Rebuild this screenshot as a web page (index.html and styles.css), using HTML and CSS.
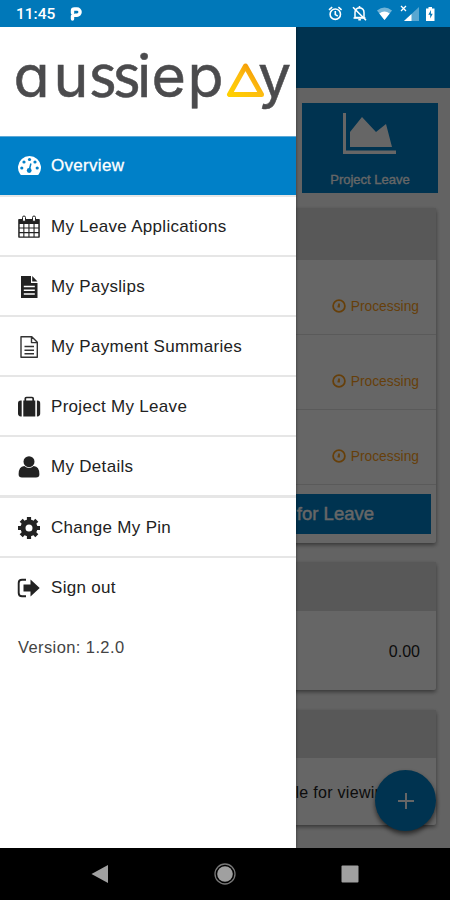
FILE: index.html
```html
<!DOCTYPE html>
<html lang="en">
<head>
  <meta charset="UTF-8">
  <meta name="viewport" content="width=device-width, initial-scale=1.0">
  <title>aussiepay</title>
  <link rel="stylesheet" href="styles.css">
</head>
<body>
  <header class="status-bar">
    <span class="time">11:45</span>
    <svg class="p-icon" width="12" height="14" viewBox="0 0 12 14"><path d="M2.500 12V9M2.500 6V3.500Q2.500 2 4.500 2h2.500a3 3 0 0 1 0 6.200H5" fill="none" stroke="#fff" stroke-width="3.400" stroke-linecap="round"/></svg>
    <svg class="status-icons" width="108" height="18" viewBox="328 5 108 18">
      <!-- alarm -->
      <g fill="none" stroke="#fff" stroke-width="1.6">
        <circle cx="335.3" cy="14.2" r="5.2"/>
        <path d="M335.3 11v3.6l2.5 1.5M329 9.8l3.2-2.7M341.6 9.8l-3.2-2.7"/>
      </g>
      <!-- muted bell -->
      <path d="M355 17.5h9v-5q0-4.2-4.5-4.7-4.5.5-4.5 4.7z" fill="none" stroke="#fff" stroke-width="1.5"/>
      <path d="M353.5 18h12M358.3 19.8h2.6M359.5 6v2M353 7.3l13 13" fill="none" stroke="#fff" stroke-width="1.6"/>
      <!-- wifi -->
      <path d="M377 10.5q7.5-6 15 0L384.5 20z" fill="#fff" opacity=".45"/>
      <path d="M379.3 13.4q5.2-4 10.4 0L384.5 20z" fill="#fff"/>
      <!-- signal -->
      <path d="M419 7v14h-15z" fill="#fff" opacity=".35"/>
      <path d="M411.5 14v7H404z" fill="#fff"/>
      <path d="M401 6l5 5M406 6l-5 5" stroke="#fff" stroke-width="1.3"/>
      <!-- battery -->
      <path d="M426 8.5h2.5V7h3.500v1.500h2.500V21H426z" fill="#fff"/>
      <path d="M431 10l-2.700 4.700h1.900V18.500l2.500-4.800h-1.800z" fill="#0078b9"/>
    </svg>
  </header>

  <main class="screen">
    <div class="page">
      <div class="toolbar"></div>
      <div class="content">
        <div class="tile">
          <svg width="54" height="42" viewBox="0 0 54 42" fill="#fff">
            <path d="M0 0h3v37.500h50v3.500H0z"/>
            <path d="M7 34V19L19 4l14 15 10-8 6 23z"/>
          </svg>
          <span>Project Leave</span>
        </div>

        <section class="card leave-card">
          <div class="card-header"></div>
          <div class="leave-row"><svg class="clock" viewBox="0 0 14 14"><circle cx="7" cy="7" r="5.900"/><path d="M7 4.500v3H5.500"/></svg>Processing</div>
          <div class="leave-row"><svg class="clock" viewBox="0 0 14 14"><circle cx="7" cy="7" r="5.900"/><path d="M7 4.500v3H5.500"/></svg>Processing</div>
          <div class="leave-row"><svg class="clock" viewBox="0 0 14 14"><circle cx="7" cy="7" r="5.900"/><path d="M7 4.500v3H5.500"/></svg>Processing</div>
          <div class="apply">for Leave</div>
        </section>

        <section class="card balance-card">
          <div class="card-header"></div>
          <div class="balance">0.00</div>
        </section>

        <section class="card payslip-card">
          <div class="card-header"></div>
          <div class="empty">available for viewing</div>
        </section>
      </div>
      <div class="fab"><svg width="18" height="18" viewBox="0 0 18 18"><path d="M9 1v16M1 9h16" stroke="#fff" stroke-width="2"/></svg></div>
    </div>

    <div class="scrim"></div>

    <nav class="drawer">
      <div class="brand">
        <svg width="296" height="109" viewBox="0 27 296 109">
          <defs>
            <linearGradient id="gold" x1="0" y1="1" x2="1" y2="0">
              <stop offset="0" stop-color="#ffd000"/>
              <stop offset=".5" stop-color="#fdbd10"/>
              <stop offset="1" stop-color="#f08a00"/>
            </linearGradient>
          </defs>
          <text class="logo-round" y="97" x="13.500 53.500">au</text>
          <text class="logo-narrow" y="97" x="89.500 113.500">ss</text>
          <text class="logo-round" y="97" x="137 151.500 187.500">iep</text>
          <path d="M245.500 66L229.500 94.500h32z" fill="none" stroke="url(#gold)" stroke-width="5" stroke-linejoin="round"/>
          <text class="logo-round" x="258" y="97">y</text>
        </svg>
      </div>
      <a class="item active">
        <svg viewBox="0 0 24 24"><path d="M3.200 21.300A11.500 11.500 0 1 1 21.800 21.300q-.4.700-1.200.7H4.400q-.8 0-1.200-.7z" fill="#fff"/><g fill="#0080c8"><circle cx="4.800" cy="15" r="1.600"/><circle cx="7" cy="9" r="1.600"/><circle cx="12.500" cy="6.500" r="1.600"/><circle cx="18" cy="9" r="1.600"/><circle cx="20.200" cy="15" r="1.600"/><circle cx="12.200" cy="17.500" r="2.400"/></g><path d="M12.200 17.500l1.700-7" stroke="#0080c8" stroke-width="1.500"/></svg>
        Overview
      </a>
      <a class="item">
        <svg viewBox="0 0 24 24"><path d="M2 4h20q.8 0 .8.800V22q0 .8-.8.800H2q-.8 0-.8-.8V4.800Q1.200 4 2 4z"/><g fill="#fff"><path d="M2.700 9h3.600v3.500H2.700zM7.400 9h4v3.500h-4zM12.500 9h4v3.500h-4zM17.600 9h3.700v3.500h-3.700zM2.700 13.500h3.600v3.600H2.700zM7.400 13.500h4v3.600h-4zM12.500 13.500h4v3.600h-4zM17.600 13.500h3.700v3.600h-3.700zM2.700 18.200h3.600v3.200H2.700zM7.400 18.200h4v3.200h-4zM12.500 18.200h4v3.200h-4zM17.600 18.200h3.700v3.200h-3.700z"/></g><rect x="5.500" y="1" width="3" height="5.500" rx="1.500" fill="#fff" stroke="#222"/><rect x="15.500" y="1" width="3" height="5.500" rx="1.500" fill="#fff" stroke="#222"/></svg>
        My Leave Applications
      </a>
      <a class="item">
        <svg viewBox="0 0 24 24"><path d="M4 1h10v7h6.500v15H4zM15.200 1l5.300 5.600h-5.300z"/><path d="M6.800 11.500h11M6.800 15.200h11M6.800 19h11" stroke="#fff" stroke-width="1.400"/></svg>
        My Payslips
      </a>
      <a class="item">
        <svg viewBox="0 0 24 24"><path d="M4 1.700h10.800l5.500 5.600v15H4zM14.500 2v5.600h5.700M7.500 11.500h9.500M7.500 15.200h9.500M7.500 18.700h9.500" fill="none" stroke="#333" stroke-width="1.400" stroke-linejoin="round"/></svg>
        My Payment Summaries
      </a>
      <a class="item">
        <svg viewBox="0 0 24 24"><path d="M8.300 6V3.700Q8.300 2.500 9.500 2.500h5.500q1.200 0 1.200 1.200V6" fill="none" stroke="#222" stroke-width="1.700"/><path d="M6.300 5.600h12v15.800h-12zM4.700 5.600v15.800H3.800q-2.800 0-2.800-2.800V8.400q0-2.800 2.800-2.800zM19.900 5.600h.5q2.800 0 2.800 2.800v10.200q0 2.800-2.800 2.800h-.5z"/></svg>
        Project My Leave
      </a>
      <a class="item last">
        <svg viewBox="0 0 24 24"><circle cx="12" cy="6.700" r="5.500"/><path d="M7.300 11q4.700 3.800 9.400 0 5.700.5 5.700 8.200 0 3.300-3.400 3.300H5q-3.400 0-3.400-3.300Q1.600 11.500 7.300 11z"/></svg>
        My Details
      </a>
      <a class="item">
        <svg viewBox="0 0 24 24"><circle cx="12" cy="12" r="6" fill="none" stroke="#222" stroke-width="5"/><path d="M12 1v4.500M12 18.500V23M1 12h4.500M18.500 12H23M4.200 4.200l3.200 3.200M16.600 16.600l3.200 3.200M4.200 19.800l3.200-3.200M16.600 7.400l3.200-3.200" stroke="#222" stroke-width="4.200"/></svg>
        Change My Pin
      </a>
      <a class="item sign-out">
        <svg viewBox="0 0 24 24"><path d="M9 3.700H5q-3.300 0-3.300 3.300v10q0 3.300 3.300 3.300h4" fill="none" stroke="#222" stroke-width="1.900"/><path d="M6.500 8.500h7V3.400L22.700 12l-9.200 8.600v-5.100h-7z"/></svg>
        Sign out
      </a>
      <p class="version">Version: 1.2.0</p>
    </nav>
  </main>

  <footer class="nav-bar">
    <svg width="18" height="20" viewBox="0 0 18 20"><path d="M17 1v18L.5 10z"/></svg>
    <svg width="22" height="22" viewBox="0 0 22 22"><circle cx="11" cy="11" r="10" fill="none" stroke="#777" stroke-width="1.300"/><circle cx="11" cy="11" r="7.800"/></svg>
    <svg width="18" height="18" viewBox="0 0 18 18"><rect x=".5" y=".5" width="17" height="17" rx="1"/></svg>
  </footer>
</body>
</html>
```
FILE: styles.css
```css
* { box-sizing: border-box; }
body {
  margin: 0;
  width: 450px;
  height: 900px;
  overflow: hidden;
  display: flex;
  flex-direction: column;
  font-family: "Liberation Sans", Arial, sans-serif;
  color: #222;
}

/* Status bar */
.status-bar {
  height: 27px;
  padding: 1px 14px 0 16px;
  display: flex;
  align-items: center;
  background: #0078b9;
  color: #fff;
}
.time {
  font-family: Roboto, sans-serif;
  font-size: 15.5px;
  font-weight: 500;
}
.p-icon { margin-left: 15px; }
.status-icons { margin-left: auto; }

/* Page under the drawer */
.screen {
  position: relative;
  height: 821px;
  overflow: hidden;
}
.page { height: 100%; background: #f8f8f8; }
.toolbar { height: 61px; background: #0080c8; }
.content {
  padding: 15px 14px 0;
  display: flex;
  flex-direction: column;
}
.tile {
  align-self: flex-end;
  width: 136px;
  height: 90px;
  margin-right: -2px;
  padding-top: 10px;
  display: flex;
  flex-direction: column;
  align-items: center;
  background: #0080c8;
  color: #fff;
  font-size: 13px;
}
.tile span { margin-top: 17px; -webkit-text-stroke: 0.3px #fff; }
.card {
  background: #fff;
  border-radius: 2px;
  box-shadow: 0 2px 4px rgba(0,0,0,0.45);
}
.card-header { background: #dcdcdc; }
.leave-card { height: 335px; margin-top: 15px; }
.leave-card .card-header { height: 52px; }
.leave-row {
  height: 75px;
  padding: 0 17px 20px 0;
  display: flex;
  align-items: flex-end;
  justify-content: flex-end;
  border-bottom: 1px solid #e2e2e2;
  color: #ff9f1a;
  font-size: 13.8px;
}
.clock {
  width: 14px;
  height: 14px;
  margin: 0 5px 1px 0;
  fill: none;
  stroke: #ff9f1a;
  stroke-width: 1.8;
}
.apply {
  height: 40px;
  margin: 9px 5px 0;
  padding-right: 57px;
  line-height: 40px;
  text-align: right;
  background: #0080c8;
  color: #fff;
  font-size: 18.5px;
  -webkit-text-stroke: 0.4px #fff;
}
.balance-card { height: 128px; margin-top: 19px; }
.balance-card .card-header { height: 49px; }
.balance {
  padding: 32px 16px 0;
  text-align: right;
  font-size: 16px;
}
.payslip-card { height: 115px; margin-top: 20px; }
.payslip-card .card-header { height: 48px; }
.empty {
  padding: 26px 43px 0 0;
  text-align: right;
  font-size: 16px;
  letter-spacing: 0.3px;
}
.fab {
  position: absolute;
  right: 14px;
  bottom: 17px;
  width: 61px;
  height: 61px;
  display: flex;
  align-items: center;
  justify-content: center;
  border-radius: 50%;
  background: #0080c8;
  box-shadow: 0 3px 5px rgba(0,0,0,0.6);
}
.scrim {
  position: absolute;
  inset: 0;
  background: rgba(0,0,0,0.6);
}

/* Drawer */
.drawer {
  position: absolute;
  top: 0;
  left: 0;
  width: 296px;
  height: 100%;
  background: #fff;
  box-shadow: 0 0 3px rgba(0,0,0,0.5);
}
.brand { height: 110px; border-bottom: 1px solid #5fa9d6; }
.brand svg { display: block; }
.logo-round, .logo-narrow {
  fill: #4b4b4d;
  stroke: #4b4b4d;
  stroke-width: 0.5px;
}
.logo-narrow {
  font-family: Lato, sans-serif;
  font-size: 62px;
}
.logo-round {
  font-family: Inter, sans-serif;
  font-size: 59px;
  font-feature-settings: "cv11";
}
.item {
  height: 60px;
  padding: 1px 0 0 17px;
  display: flex;
  align-items: center;
  gap: 10px;
  border-bottom: 2px solid #e6e6e6;
  font-size: 17px;
  letter-spacing: 0.3px;
}
.item svg {
  width: 24px;
  height: 24px;
  fill: #222;
}
.item.active {
  padding-top: 0;
  background: #0080c8;
  color: #fff;
  -webkit-text-stroke: 0.3px #fff;
}
.item.active svg { margin-bottom: 3px; }
.item.last { height: 61px; border-bottom-width: 3px; }
.item.sign-out { height: 59px; border-bottom: 0; padding-top: 0; }
.version {
  margin: 0;
  padding-left: 18px;
  line-height: 60px;
  font-size: 16.5px;
  letter-spacing: 0.4px;
  color: #444;
}

/* Android navigation */
.nav-bar {
  height: 52px;
  padding: 0 91px;
  display: flex;
  align-items: center;
  justify-content: space-between;
  background: #000;
}
.nav-bar svg { fill: #a0a0a0; }
```
